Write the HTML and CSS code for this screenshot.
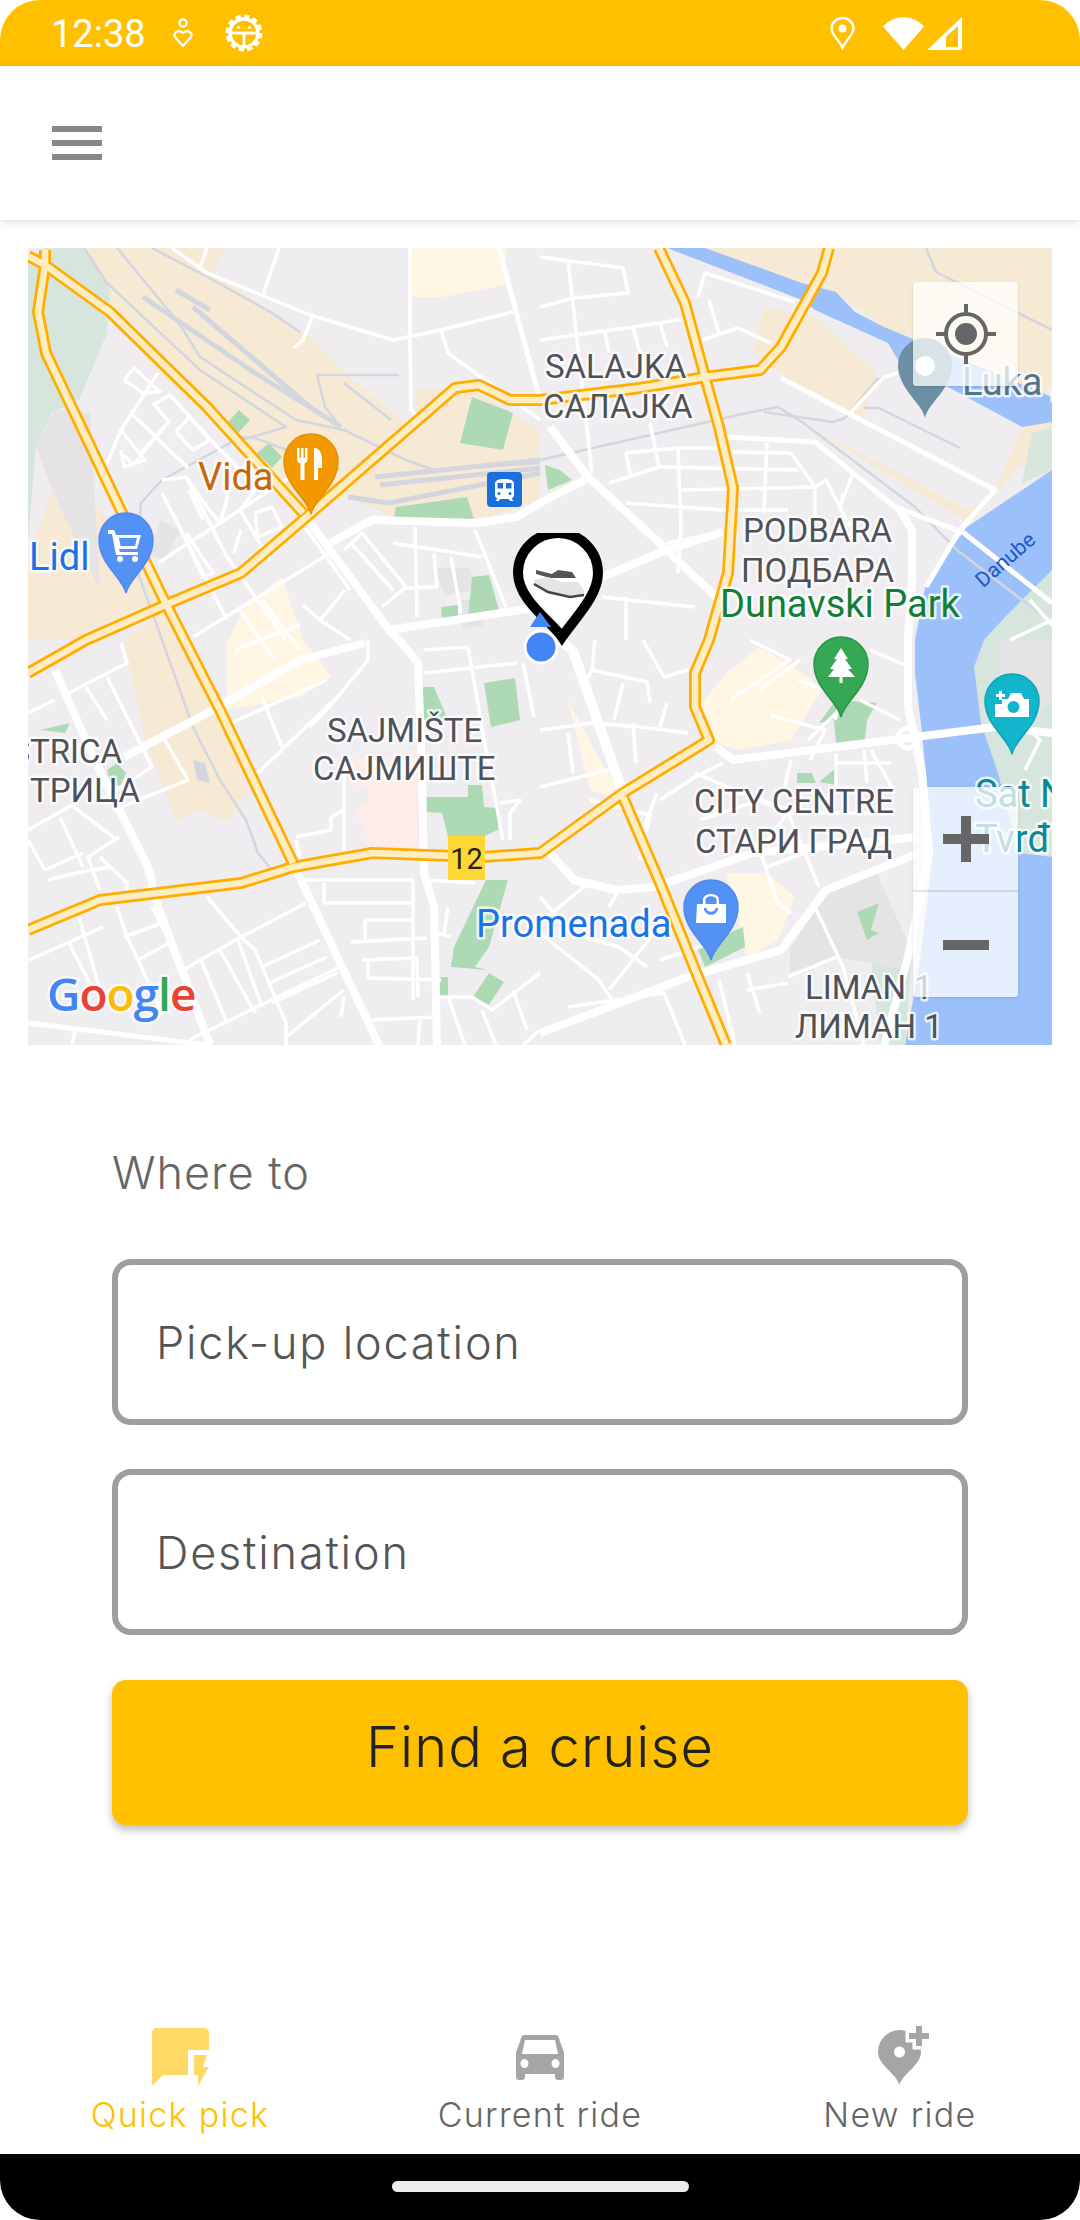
FILE: index.html
```html
<!DOCTYPE html>
<html lang="en">
<head>
    <meta charset="UTF-8">
    <meta name="viewport" content="width=device-width, initial-scale=1.0">
    <title>Quick pick</title>
    <link rel="stylesheet" href="styles.css">
</head>
<body>
    <div class="status-bar">
        <span class="status-time">12:38</span>
        <svg class="status-heart" width="20" height="30" viewBox="0 0 20 30"><circle cx="10" cy="5" r="3.6" fill="none" stroke="#fff" stroke-width="2.2"/><path d="M10 28 2.4 19.5C-.4 15.6 4.6 10.5 10 15 15.4 10.5 20.4 15.6 17.6 19.5Z" fill="none" stroke="#fff" stroke-width="2.2" stroke-linejoin="round"/></svg>
        <svg class="status-gear" width="40" height="40" viewBox="0 0 40 40"><circle cx="20" cy="20" r="16.5" fill="none" stroke="#fff" stroke-width="4" stroke-dasharray="5.2 3.4"/><circle cx="20" cy="20" r="14" fill="none" stroke="#fff" stroke-width="3.4"/><path d="M6 20H34M20 20V34" stroke="#fff" stroke-width="3"/><circle cx="14.500" cy="14.500" r="1.600" fill="#fff"/><circle cx="25.500" cy="14.500" r="1.600" fill="#fff"/></svg>
        <span class="status-right">
            <svg width="25" height="33" viewBox="0 0 25 33"><path d="M12.500 31C10 24 1.500 18 1.500 11.500A11 10.500 0 0 1 23.500 11.500C23.500 18 15 24 12.500 31Z" fill="none" stroke="#fff" stroke-width="2.4"/><circle cx="12.500" cy="11.500" r="4" fill="#fff"/></svg>
            <svg class="status-wifi" width="41" height="33" viewBox="0 0 41 33"><path d="M20.500 33 0 9.500C11 -3 30 -3 41 9.500Z" fill="#fff"/></svg>
            <svg class="status-signal" width="35" height="33" viewBox="0 0 35 33"><path fill-rule="evenodd" d="M0 33 35 0V33ZM19 30H31V9L19 20Z" fill="#fff"/></svg>
        </span>
    </div>

    <header class="app-header">
        <button class="menu-button" type="button" aria-label="Menu"><span></span><span></span><span></span></button>
    </header>

    <div class="map-wrap">
        <svg class="map" width="1024" height="797" viewBox="28 248 1024 797">
            <defs>
                <path id="pin" d="M0 53C-3 38-27 24-27 0A27 27 0 1 1 27 0C27 24 3 38 0 53Z"/>
                <clipPath id="markerClip"><rect x="500" y="533" width="120" height="120"/></clipPath>
                <g id="highways">
                    <path d="M28 256 45 265 110 312 207 407 303 513"/>
                    <path d="M45 250 45 265 38 312 46 353 124 517 165 602 220 710 293 863"/>
                    <path d="M28 673 86 640 172 602 241 573 303 520 455 388 479 385 510 400 540 400 640 388 705 377 760 370 781 347 822 273 829 248"/>
                    <path d="M659 248 685 303 705 377 719 427 733 488 728 573 709 640 695 673 695 707 709 740 623 793 540 853 482 857 372 853 293 867 241 883 100 900 28 930"/>
                    <path d="M623 797 660 883 698 977 726 1045"/>
                </g>
            </defs>

            <rect class="land" x="28" y="248" width="1024" height="797"/>

            <!-- land use -->
            <path class="tan" d="M83 248H224L213 273 310 337 344 373 413 427 417 390 470 388 540 430V500L480 520 396 517 344 497 305 513 190 400 150 365 110 312 107 333 79 400 60 300Z"/>
            <path class="tan" d="M28 640V560L52 490 100 510 165 602 86 640Z"/>
            <path class="tan" d="M124 640 145 740 176 820 203 810 227 822 248 793 220 700 179 640 165 610Z"/>
            <path class="tan" d="M612 248H1052V400L884 327 836 292 802 283 705 248Z"/>
            <path class="tan" d="M753 350 764 307 815 317 876 373 864 420 788 380Z"/>
            <path class="tan" d="M802 423 970 523 1019 467 1052 450V420L1022 427 995 490 970 510Z"/>
            <path class="pale" d="M28 260 45 248H83L110 290 107 333 79 400 52 413 36 447 28 540Z"/>
            <path class="grey" d="M36 447 55 410 90 413 100 590 52 490Z"/>
            <path class="water" d="M667 248H705L802 283 836 292 855 312 884 327 1052 397V422L1022 427 898 360 888 343 815 310 802 300Z"/>
            <path class="pale" d="M1032 433 1052 427V470L1022 483Z"/>
            <path class="water" d="M1052 470 967 527 926 583 915 640 915 673 922 733 926 773 933 853 920 960 905 1045H1052Z"/>
            <path class="pale" d="M1052 570 1005 617 984 640 974 667 981 723 998 773 1019 853 1052 857Z"/>
            <path class="grey" d="M1052 640 1000 640 1000 700 1030 720 1052 700Z"/>
            <path class="pale" d="M876 873 912 953 905 1045H880L872 973Z"/>
            <path class="grey" d="M790 950 826 893 876 872 910 947 908 970 870 963 836 957 790 973Z"/>
            <path class="cream" d="M410 248H506L505 285 443 297H410Z"/>
            <path class="cream" d="M227 643 244 607 282 577 303 640 332 677 300 697 227 710Z"/>
            <path class="cream" d="M702 703 726 673 760 647 809 677 822 690 791 740 740 750 716 743Z"/>
            <path class="cream" d="M726 873H767L795 897 778 940 747 957 736 907Z"/>
            <path class="cream" d="M568 700 600 760 625 800 590 790 575 730Z"/>
            <path class="pink" d="M344 760 417 750V850L367 847V837L355 810 368 800V787L344 783Z"/>
            <path class="grey" d="M462 600H480L484 625 462 630ZM434 568H470L478 590 445 595ZM160 520 180 530 165 560 150 555Z"/>
            <path class="green" d="M472 397 513 413 503 450 460 443ZM396 507 467 497 475 522 394 517ZM227 423 239 410 250 420 238 433ZM257 453 269 443 282 457 272 468ZM484 683 515 678 520 720 491 727ZM422 687H434L448 720H423ZM425 797H468V785H482L484 807 498 808V830L482 837H448L442 813 425 812ZM486 880H508L489 947 475 967 489 970 451 967 454 947ZM473 997 489 973 504 982 489 1005ZM437 977H448V996H437ZM472 577 489 575 499 610 468 617ZM441 607 458 605V622H442ZM40 730 70 723 65 733ZM107 770 117 763 126 773 120 787 110 783ZM819 723 836 700 877 703 867 720 865 740 836 743 834 720ZM797 773H812L816 783H797ZM819 782 836 768V785ZM857 912 879 903 871 930 879 933 867 940ZM697 947 743 927 745 947 705 967ZM540 560 560 555 570 590 555 590ZM545 465 560 470 572 480 548 490Z"/>

            <!-- rail -->
            <path class="rail" d="M117 248 179 323 200 357 296 420 344 430 406 460 434 470 540 463M152 248 213 280 272 313 300 332M84 248 107 283 200 370 286 427 241 440M317 375H399M317 375 325 407 341 427M344 383 391 420M138 573 162 640 193 727 220 780 246 820 258 853 272 870M139 527 141 503 162 480 241 437 255 438 340 470M540 460 747 413 778 407 802 422 915 507 957 550 1039 613M764 412 833 422 845 418 876 380 898 373M864 408H879L960 448M926 248 936 272 1052 330"/>
            <path class="rail-thick" d="M143 297 255 373 341 427M176 290 210 310M193 307 310 407 341 427M375 477 540 460M380 485 540 468M348 497 389 503 540 473"/>
            <path class="rail-blob" d="M193 760 205 763 210 783 197 780Z"/>

            <!-- minor streets -->
            <path class="street" d="M172 248 207 273 310 315 393 340 441 330 513 312M279 248 263 295M207 248 200 267M313 315 303 340 294 348M410 248V340L411 410 418 417M441 330 448 353 540 420M158 373 121 430 107 463M124 380 134 368 160 392 143 393 124 380M153 405 170 395 220 450 240 470M170 420 133 465 124 455M162 480 186 477 227 557 286 640M162 493 227 620M158 563 220 523 300 470M330 553 286 580 193 637M344 550 362 533 406 587 382 607M351 543 393 590M415 527 417 617M393 543 482 557M434 553 437 587 406 588M451 557 461 613M475 530 506 607"/>
            <path class="street" d="M121 430 131 443 145 460 124 467 121 450M133 415 188 468M153 403 169 422 141 453M176 432 193 450 210 440 189 417 176 432M186 477 207 507 220 523M189 490 203 520M220 523 227 500V478M255 513 258 537 282 527 272 507 255 513M241 530 234 553M186 533 213 573 203 577 189 547M303 605 320 620 345 590M320 620 350 640M262 480 240 510 270 560M300 520 350 590M240 610 275 660M262 600 300 650M235 650 300 625"/>
            <path class="street" d="M540 257 623 268 628 293 574 298 540 307M568 260 592 473M540 340 660 323 688 318M605 333 609 353M633 328 640 353M660 323 667 347M650 423 659 467 609 483M626 453 631 477M626 453 678 448 719 448M678 448 681 527 678 573M659 467 798 470M681 490 815 487M626 503 723 510 788 510M733 452 791 453 815 487 826 480 850 527M767 443 764 513M815 487 815 517M705 273 698 297M709 300 719 333M705 273 795 302M702 340 738 328 771 343M667 543 723 532M843 493 840 507 853 473M602 597 695 607M626 597V640M850 413 884 377 898 373"/>
            <path class="street" d="M121 643 127 663 69 693M107 677 152 767 100 800M86 687 107 720M28 713 55 700M28 830 76 803M60 817 83 867M74 807 117 840M45 870 28 840M45 870 83 853M119 837 88 857 100 890M100 857 127 883V890M48 880 76 873 110 867M165 740 188 780 114 810M79 917 100 990M162 923 124 937M117 907 127 937 138 960 162 1013M152 907 186 973 210 1040M169 943 138 960M29 960 103 927M69 943 93 990M207 897 241 937 255 950 286 1023V1045M183 970 241 937 306 903M201 960 227 1023M220 950 255 1013M238 940 262 1007M189 1040 286 993 344 965M262 967 320 940M269 983 327 957M272 1003 337 973M286 1037 344 990"/>
            <path class="street" d="M303 880H413V1000M324 883V903H413M365 920H413M365 920V940M351 942 427 938M362 960 417 958 418 997M368 960V978L441 980M296 837 331 830V817L344 810M296 840 301 862M344 760V850M258 773 341 693 368 660V640M231 723 327 680M282 747 262 697M310 727 340 695M424 650 468 647M424 673 517 663M499 803 520 800 510 813V840M468 647 486 750 503 840M523 663 534 717M427 880 475 883M448 907 444 933M437 933 451 937M437 997H472L492 1010 540 973M448 997 465 1045M482 1010 496 1045M513 990 527 1030M523 1045 540 1030M372 1020 437 1017M420 1017 418 1045M344 997 341 1017M76 1027 72 1045"/>
            <path class="street" d="M585 683 592 670 647 682 650 703M595 640 592 670M643 640 664 677 688 670M623 683 614 720M540 730 592 723 640 727 688 733M667 703 660 727M568 733 573 773M540 787 609 770M633 723 636 763M657 793 643 830M723 763 695 777 660 800M695 773 788 813 819 887M781 813 895 813M757 843 778 903 791 913M767 867 819 847M836 753V787M864 750 867 783M871 750 895 793M836 763H891M791 760 784 790M815 907 843 967 864 1045M788 977 836 957M747 973 760 1013M747 990 788 983M719 980 735 1045M540 933 599 980 612 1000M568 1007 664 993 685 1045M540 897 571 933 619 947 647 967M540 923 592 880M609 990 654 933M609 907 619 890"/>
            <path class="street" d="M798 680 850 700 808 740M770 715 825 730 810 760M590 800 650 815 640 860M700 820 760 800M730 790 790 810 760 850M660 960 720 940M840 640 850 665 835 720M860 700 900 720M870 650 905 665M750 640 790 660 730 700M800 660 760 690M1012 700 1000 725 1052 735M1000 700 1040 740 1025 770M1010 640 1052 620M1030 600 1052 625"/>

            <!-- main white roads -->
            <path class="road" d="M303 513 389 630 399 640 418 663 422 773 424 873 434 907 437 1045"/>
            <path class="road" d="M293 863 379 1045"/>
            <path class="road" d="M55 670 96 763 148 867 158 907 210 1045"/>
            <path class="road" d="M124 757 213 710 300 660 365 643"/>
            <path class="road" d="M330 543 372 520 475 523 517 517 540 503 585 480"/>
            <path class="road" d="M389 630 540 607 602 577 667 550 723 532"/>
            <path class="road" d="M550 427 588 477 667 550 719 600"/>
            <path class="road wide" d="M560 640 573 651 623 793"/>
            <path class="road thin" d="M499 248 540 400"/>
            <path class="road" d="M716 747 733 760 891 740 995 727 1052 733"/>
            <path class="road" d="M550 853 574 880 616 890 654 887 753 853 919 837"/>
            <path class="road" d="M540 1033 688 977 781 950 826 890 919 853"/>
            <path class="road" d="M898 507 912 530 912 580 908 640 908 707 922 773 929 853 908 957 884 1045"/>
            <path class="road thin" d="M781 378 995 490 960 530 926 587"/>
            <path class="road thin" d="M726 437 815 442 895 507 964 533 1052 603"/>
            <path class="road thin" d="M28 1023 207 1045"/>
            <circle class="road thin" cx="908" cy="738" r="10"/>

            <use class="hw-case" href="#highways"/>
            <use class="hw-fill" href="#highways"/>

            <!-- place labels -->
            <text class="label" x="545" y="378">SALAJKA</text>
            <text class="label" x="543" y="418">САЛАЈКА</text>
            <text class="label" x="743" y="542">PODBARA</text>
            <text class="label" x="741" y="582">ПОДБАРА</text>
            <text class="label" x="327" y="742">SAJMIŠTE</text>
            <text class="label" x="313" y="780">САЈМИШТЕ</text>
            <text class="label" x="694" y="813">CITY CENTRE</text>
            <text class="label" x="695" y="853">СТАРИ ГРАД</text>
            <text class="label" x="805" y="999">LIMAN 1</text>
            <text class="label" x="795" y="1038">ЛИМАН 1</text>
            <text class="label" x="122" y="763" text-anchor="end">STRICA</text>
            <text class="label" x="140" y="802" text-anchor="end">ТРИЦА</text>
            <text class="poi poi-green" x="720" y="617">Dunavski Park</text>
            <text class="poi poi-orange" x="198" y="490">Vida</text>
            <text class="poi poi-blue" x="29" y="570">Lidl</text>
            <text class="poi poi-blue" x="476" y="937">Promenada</text>
            <text class="poi poi-slate" x="962" y="395">Luka д</text>
            <text class="poi poi-teal" x="975" y="807">Sat N</text>
            <text class="poi poi-teal" x="975" y="852">Tvrđ</text>
            <text class="river-label" transform="translate(1010 565) rotate(-41)" text-anchor="middle">Danube</text>

            <!-- road shield and transit -->
            <rect class="shield" x="448" y="836" width="37" height="44"/>
            <text class="shield-text" x="466.500" y="869" text-anchor="middle">12</text>
            <rect class="transit" x="487" y="472" width="35" height="35" rx="4"/>
            <path class="glyph" fill-rule="evenodd" d="M504.500 479C497 479 495 481 495 484V495C495 497 496 498 497.500 498.500L495.500 501H498.500L500.500 499H508.500L510.500 501H513.500L511.500 498.500C513 498 514 497 514 495V484C514 481 512 479 504.500 479ZM497.500 483H503V488.500H497.500ZM506 483H511.500V488.500H506ZM499 492A1.500 1.500 0 1 0 499 495 1.500 1.500 0 0 0 499 492ZM510 492A1.500 1.500 0 1 0 510 495 1.500 1.500 0 0 0 510 492Z"/>

            <!-- pins -->
            <use class="pin-orange" href="#pin" x="311" y="461"/>
            <path class="glyph" d="M297 448H299.500V458H301V448H303.500V458H305V448H307.500V459C307.500 462 305.500 463 304.500 463.500V480H300.500V463.500C299 463 297 462 297 459ZM314 480V448C319 448 322 452 322 460V468H318V480Z"/>
            <use class="pin-blue" href="#pin" x="126" y="540"/>
            <path class="glyph" fill-rule="evenodd" d="M108 530H114L116 535H141L137 549H119L120 552H138V555H116L112 534H108ZM119 538 120.500 546H135L137 538ZM120 556A3 3 0 1 0 120 562 3 3 0 0 0 120 556ZM135 556A3 3 0 1 0 135 562 3 3 0 0 0 135 556Z"/>
            <use class="pin-green" href="#pin" x="841" y="664"/>
            <path class="glyph" d="M841 648 848 659H845L852 669H848L855 677H842.500V683H839.500V677H828L834 669H830L837 659H834Z"/>
            <use class="pin-teal" href="#pin" x="1012" y="701"/>
            <path class="glyph" fill-rule="evenodd" d="M1002 699H1008L1011 693H1021L1024 699H1029V717H995V704H1002ZM1013.500 701A6 6 0 1 0 1013.500 713 6 6 0 0 0 1013.500 701ZM999 691H1002V694H1005V697H1002V700H999V697H996V694H999Z"/>
            <use class="pin-blue" href="#pin" x="711" y="907"/>
            <path class="glyph" fill-rule="evenodd" d="M697 904H703V900C703 892 719 892 719 900V904H726V923H696ZM705.500 904H716.500V900C716.500 895 705.500 895 705.500 900ZM704 908C704 917 718 917 718 908H715.500C715.500 913 706.500 913 706.500 908Z"/>
            <use class="pin-slate" href="#pin" x="925" y="365"/>
            <circle class="glyph" cx="925" cy="366" r="10"/>

            <!-- vehicle and my location -->
            <g clip-path="url(#markerClip)">
                <path class="marker" d="M562 637C552 622 518 600 518 573A40 40 0 0 1 598 573C598 596 575 618 562 637Z"/>
            </g>
            <path class="car-shape" d="M536 570 552 574 558 570 572 572 576 578 560 578 550 578 536 574Z"/>
            <path class="car-body" d="M534 580 548 577 562 582 578 582 584 590V594L570 596 548 592 536 586Z"/>
            <path class="car-line" d="M534 584 548 592 570 597 584 595"/>
            <path class="my-arrow" d="M540 612 551 627H530Z"/>
            <circle class="my-dot" cx="541" cy="647" r="16"/>

            <!-- google -->
            <text class="google" x="47" y="1011"><tspan class="g-blue">G</tspan><tspan class="g-red">o</tspan><tspan class="g-yellow">o</tspan><tspan class="g-blue">g</tspan><tspan class="g-green">l</tspan><tspan class="g-red">e</tspan></text>
        </svg>

        <button class="map-button locate" type="button" aria-label="My location">
            <svg width="60" height="60" viewBox="0 0 60 60"><circle cx="30" cy="30" r="20" fill="none" stroke="#666" stroke-width="4"/><circle cx="30" cy="30" r="11" fill="#666"/><path d="M30 0V10M30 50V60M0 30H10M50 30H60" stroke="#666" stroke-width="4"/></svg>
        </button>
        <div class="map-button zoom">
            <button type="button" aria-label="Zoom in"><svg width="46" height="46" viewBox="0 0 46 46"><path d="M0 23H46M23 0V46" stroke="#666" stroke-width="10"/></svg></button>
            <button type="button" aria-label="Zoom out"><svg width="46" height="46" viewBox="0 0 46 46"><path d="M0 23H46" stroke="#666" stroke-width="10"/></svg></button>
        </div>
    </div>

    <form class="ride-form">
        <label class="form-title">Where to</label>
        <input class="field" type="text" placeholder="Pick-up location">
        <input class="field" type="text" placeholder="Destination">
        <button class="find-button" type="button">Find a cruise</button>
    </form>

    <nav class="bottom-nav">
        <a class="nav-item active" href="#">
            <svg width="60" height="62" viewBox="0 0 60 62"><path d="M7 3H54C57 3 59 5 59 8V25H38V50H13L2 61V8C2 5 4 3 7 3Z" fill="#ffd966"/><path d="M44 30H57L53 42H59L48 61V50H44Z" fill="#ffd966"/></svg>
            <span>Quick pick</span>
        </a>
        <a class="nav-item" href="#">
            <svg width="60" height="62" viewBox="0 0 60 62"><path fill-rule="evenodd" d="M14 10H46C47.500 10 48 11 48.500 12L54 28V52C54 54 53 55 51 55H48C46 55 45 54 45 52V49H15V52C15 54 14 55 12 55H9C7 55 6 54 6 52V28L11.500 12C12 11 12.500 10 14 10ZM15 15 12 29H48L45 15ZM14.500 34A4 4.500 0 1 0 14.500 43 4 4.500 0 0 0 14.500 34ZM45.500 34A4 4.500 0 1 0 45.500 43 4 4.500 0 0 0 45.500 34Z" fill="#a5a5a5"/></svg>
            <span>Current ride</span>
        </a>
        <a class="nav-item" href="#">
            <svg width="60" height="62" viewBox="0 0 60 62"><path fill-rule="evenodd" d="M29.500 60C26 48 8 40 8 27A21.500 22 0 0 1 51 27C51 40 33 48 29.500 60ZM29.500 21.500A5.500 5.500 0 1 0 29.500 32.500 5.500 5.500 0 0 0 29.500 21.500Z" fill="#a5a5a5"/><path d="M46 1H52V8H59V14H52V21H46V14H39V8H46Z" fill="#a5a5a5" stroke="#fff" stroke-width="7" paint-order="stroke"/></svg>
            <span>New ride</span>
        </a>
    </nav>

    <div class="system-nav"><span class="home-pill"></span></div>
</body>
</html>
```

FILE: styles.css
```css
* {
    box-sizing: border-box;
}
html, body {
    margin: 0;
    padding: 0;
}
body {
    width: 1080px;
    height: 2220px;
    display: flex;
    flex-direction: column;
    background: #fff;
    font-family: Inter, "Open Sans", sans-serif;
    overflow: hidden;
}

/* status bar */
.status-bar {
    height: 66px;
    flex: none;
    display: flex;
    align-items: center;
    padding: 0 118px 0 51px;
    background: #ffc000;
    border-radius: 40px 40px 0 0;
    color: #fff;
}
.status-time {
    font-family: Roboto, sans-serif;
    font-size: 38px;
    line-height: 1;
    margin-top: 2px;
}
.status-heart {
    margin: 0 0 0 27px;
}
.status-gear {
    margin-left: 31px;
}
.status-right {
    margin-left: auto;
    display: flex;
    align-items: center;
}
.status-wifi {
    margin-left: 28px;
}
.status-signal {
    margin-left: 3px;
}

/* header */
.app-header {
    height: 154px;
    flex: none;
    display: flex;
    align-items: center;
    padding-left: 52px;
    background: #fff;
    box-shadow: 0 2px 8px rgba(0, 0, 0, 0.14);
    position: relative;
}
.menu-button {
    display: flex;
    flex-direction: column;
    gap: 8px;
    width: 50px;
    padding: 0;
    border: none;
    background: none;
}
.menu-button span {
    display: block;
    height: 6px;
    background: #888;
}

/* map */
.map-wrap {
    position: relative;
    flex: none;
    width: 1024px;
    height: 797px;
    margin: 28px 28px 0;
    overflow: hidden;
}
.map {
    display: block;
}
.land { fill: #f0edf0; }
.tan { fill: #f6ead4; }
.pale { fill: #d6e6dd; }
.grey { fill: #e6e3e6; }
.cream { fill: #fff6e3; }
.pink { fill: #fdecea; }
.green { fill: #addab5; }
.water { fill: #9cc0fa; }
.rail, .rail-thick, .street, .road {
    fill: none;
    stroke-linejoin: round;
}
.rail { stroke: #d3d6df; stroke-width: 2.5; }
.rail-thick { stroke: #d3d6df; stroke-width: 5; }
.rail-blob { fill: #d3d6df; }
.street { stroke: #fff; stroke-width: 3.5; }
.road { stroke: #fff; stroke-width: 8; }
.road.wide { stroke-width: 10; }
.road.thin { stroke-width: 5; }
.hw-case, .hw-fill {
    fill: none;
    stroke-linejoin: round;
}
.hw-case { stroke: #ffad00; stroke-width: 12; }
.hw-fill { stroke: #feedc2; stroke-width: 6.5; }

.label, .poi, .river-label, .shield-text {
    font-family: Roboto, sans-serif;
    paint-order: stroke;
    stroke-linejoin: round;
}
.label {
    font-size: 33px;
    fill: #4e5258;
    stroke: rgba(255, 255, 255, 0.75);
    stroke-width: 5px;
}
.poi {
    font-size: 38px;
    stroke: rgba(255, 255, 255, 0.8);
    stroke-width: 5px;
}
.poi-green { fill: #137d3a; }
.poi-orange { fill: #c8660a; }
.poi-blue { fill: #1a73e8; }
.poi-slate { fill: #557488; }
.poi-teal { fill: #0a8a97; }
.river-label {
    font-size: 21px;
    fill: #1b59c8;
}
.shield { fill: #fdd835; }
.shield-text {
    font-size: 29px;
    fill: #26231a;
}
.transit { fill: #1a6fdc; }
.glyph { fill: #fff; }
.pin-orange { fill: #f29900; stroke: #e48f00; stroke-width: 1.5; }
.pin-blue { fill: #5491f5; stroke: #4e8aed; stroke-width: 1.5; }
.pin-green { fill: #34a853; stroke: #2a9347; stroke-width: 1.5; }
.pin-teal { fill: #12b5cb; stroke: #10a3b7; stroke-width: 1.5; }
.pin-slate { fill: #6d8fa3; }
.marker {
    fill: #fff;
    stroke: #000;
    stroke-width: 10;
}
.car-shape { fill: #555; }
.car-body { fill: #e4e4e4; }
.car-line { fill: none; stroke: #444; stroke-width: 2.5; }
.my-arrow { fill: #4285f4; }
.my-dot {
    fill: #4285f4;
    stroke: #fff;
    stroke-width: 3;
}
.google {
    font-family: "Open Sans", sans-serif;
    font-size: 46px;
    font-weight: 600;
    letter-spacing: -1px;
    paint-order: stroke;
    stroke: rgba(255, 255, 255, 0.7);
    stroke-width: 5px;
}
.g-blue { fill: #4285f4; }
.g-red { fill: #ea4335; }
.g-yellow { fill: #fbbc05; }
.g-green { fill: #34a853; }

.map-button {
    position: absolute;
    right: 34px;
    width: 105px;
    background: rgba(255, 255, 255, 0.74);
    border-radius: 3px;
    box-shadow: 0 1px 3px rgba(0, 0, 0, 0.12);
}
.map-button button {
    display: flex;
    align-items: center;
    justify-content: center;
    width: 100%;
    height: 105px;
    padding: 0;
    border: none;
    background: none;
}
.locate {
    top: 34px;
    height: 104px;
    display: flex;
    align-items: center;
    justify-content: center;
    padding: 0;
    border: none;
}
.zoom {
    top: 539px;
}
.zoom button:first-child {
    border-bottom: 2px solid rgba(0, 0, 0, 0.1);
}

/* form */
.ride-form {
    flex: none;
    display: flex;
    flex-direction: column;
    padding: 103px 112px 0;
}
.form-title {
    font-size: 45px;
    font-weight: 300;
    letter-spacing: 1px;
    line-height: 50px;
    color: #666;
    margin-bottom: 61px;
}
.field {
    height: 166px;
    margin-bottom: 44px;
    padding: 0 38px;
    border: 6px solid #9e9e9e;
    border-radius: 19px;
    background: #fff;
    font-family: inherit;
    font-size: 45px;
    font-weight: 300;
    letter-spacing: 1.800px;
    color: #555;
    outline: none;
}
.field::placeholder {
    color: #555;
    opacity: 1;
}
.find-button {
    height: 145px;
    margin-top: 1px;
    padding-bottom: 12px;
    border: none;
    border-radius: 14px;
    background: #ffc000;
    box-shadow: 0 5px 9px rgba(0, 0, 0, 0.25);
    font-family: inherit;
    font-size: 56px;
    font-weight: 300;
    letter-spacing: 1.100px;
    color: #222;
}

/* bottom navigation */
.bottom-nav {
    margin-top: auto;
    height: 139px;
    flex: none;
    display: flex;
}
.nav-item {
    flex: 1;
    display: flex;
    flex-direction: column;
    align-items: center;
    padding-top: 10px;
    color: #666;
    font-size: 34px;
    font-weight: 300;
    letter-spacing: 1.300px;
    line-height: 1;
    text-decoration: none;
}
.nav-item span {
    margin-top: 11px;
}
.nav-item.active {
    color: #ffc000;
}

/* android nav bar */
.system-nav {
    height: 66px;
    flex: none;
    display: flex;
    justify-content: center;
    padding-top: 27px;
    background: #000;
    border-radius: 0 0 40px 40px;
}
.home-pill {
    width: 297px;
    height: 11px;
    border-radius: 6px;
    background: #ececec;
}
```
